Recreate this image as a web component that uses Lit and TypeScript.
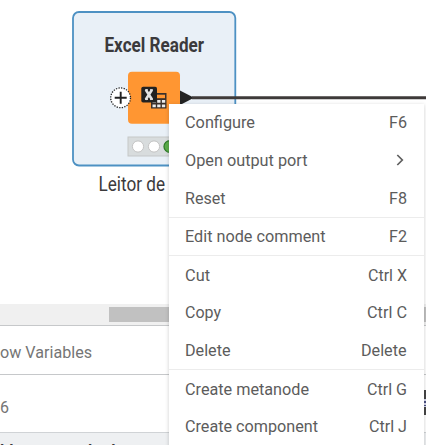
import { LitElement, html, css, svg } from "lit";
import { customElement } from "lit/decorators.js";

type Item = { label: string; key: string; width: number; keyWidth: number };

const groups: Item[][] = [
  [
    { label: "Configure", key: "F6", width: 70, keyWidth: 18 },
    { label: "Open output port", key: "", width: 122.5, keyWidth: 0 },
    { label: "Reset", key: "F8", width: 40.5, keyWidth: 18 },
  ],
  [{ label: "Edit node comment", key: "F2", width: 140.5, keyWidth: 18 }],
  [
    { label: "Cut", key: "Ctrl X", width: 25, keyWidth: 39 },
    { label: "Copy", key: "Ctrl C", width: 36, keyWidth: 40 },
    { label: "Delete", key: "Delete", width: 45.5, keyWidth: 45.5 },
  ],
  [
    { label: "Create metanode", key: "Ctrl G", width: 124, keyWidth: 40 },
    { label: "Create component", key: "Ctrl J", width: 133, keyWidth: 38 },
  ],
];

const fitted = (text: string, width: number) => html`
  <svg class="fit" width=${width} height="24">
    ${svg`<text x="0" y="18" textLength=${width} lengthAdjust="spacingAndGlyphs">${text}</text>`}
  </svg>`;

@customElement("app-root")
export class AppRoot extends LitElement {
  static styles = css`
    :host { display: block; position: relative; width: 426px; height: 445px; overflow: hidden; background: #fff; font-family: Roboto, sans-serif; }
    * { box-sizing: border-box; }
    svg { display: block; overflow: visible; flex: none; }
    .canvas { height: 304px; overflow: hidden; }
    .graph text { font-family: Roboto, sans-serif; fill: #3b3a3c; }
    .track { height: 21px; background: #f0f0f0; padding: 3px 0 3px 109px; }
    .thumb { height: 15px; background: #c1c1c1; }
    .tabs { height: 50px; border-top: 1px solid #c6c8ca; border-bottom: 1px solid #c6c8ca; display: flex; align-items: center; padding-top: 4px; }
    .count { height: 58px; border-bottom: 1px solid #d0d3d6; display: flex; align-items: center; padding-top: 7px; position: relative; }
    .panel .fit text { font-size: 16px; fill: #757575; }
    .head { height: 30px; background: #eef0f2; padding-top: 8px; display: flex; font-size: 16px; line-height: 19px; font-weight: 700; color: #3b3a3c; white-space: nowrap; }
    .col { width: 88px; letter-spacing: 5px; }
    .gap { margin-left: 19px; }
    .edge { position: absolute; left: 424px; top: 15px; width: 2px; height: 25px; background: linear-gradient(#444 9px, #d5d7ee 9px 11px, #4a5080 11px 13px, #d5d7ee 13px 15px, #4a5080 15px 16px, #d5d7ee 16px 17px, #444 17px); }
    .menu { position: absolute; left: 169px; top: 104px; width: 255px; height: 350px; background: #fff; box-shadow: 0 1px 4px rgba(50, 50, 50, 0.23); }
    .group + .group { border-top: 1px solid #ececec; }
    .item { height: 37.6px; display: flex; align-items: center; justify-content: space-between; padding: 0 17.5px 0.8px 16.3px; }
    .item .fit text { font-size: 16px; fill: #5c5c5c; }
    .arrow { margin-right: 3px; margin-top: 1px; }
  `;

  render() {
    return html`
      <div class="canvas">
        <svg class="graph" width="426" height="304">
          <rect x="73" y="12" width="162.3" height="153.5" rx="6" fill="#e9f0f7" stroke="#4d91c3" stroke-width="1.8" />
          <text x="104.5" y="52.3" font-size="19.5" font-weight="700" textLength="99.5" lengthAdjust="spacingAndGlyphs">Excel Reader</text>
          <rect x="128" y="71.7" width="52" height="52" rx="4" fill="#ff9632" />
          <circle cx="120.6" cy="97.8" r="9.9" fill="#fff" stroke="#222" stroke-width="1.3" stroke-dasharray="1.3 1.3" />
          <path d="M114.7 97.8h12M120.7 91.8v12" stroke="#222" stroke-width="1.9" />
          <path d="M151 93h15.5v15.5H151z" fill="#3a302b" />
          <path d="M153 94.7h12v3.5h-12z" fill="#ff9632" />
          <path d="M152.5 100h3.3v2.8h-3.3zM157.2 100h3.3v2.8h-3.3zM161.9 100h3.3v2.8h-3.3zM152.5 104.4h3.3v2.8h-3.3zM157.2 104.4h3.3v2.8h-3.3zM161.9 104.4h3.3v2.8h-3.3z" fill="#ececec" />
          <rect x="141.3" y="86.8" width="15.7" height="15.7" rx="1.8" fill="#222" />
          <path d="M145.8 89.8l6.2 9.7M152 89.8l-6.2 9.7" stroke="#e3e3e3" stroke-width="2.6" />
          <path d="M145 89.8h3M150 89.8h3M145 99.4h3M150 99.4h3" stroke="#e3e3e3" stroke-width="1" />
          <path d="M180 90.5l14 7.2-14 7.2z" fill="#222" />
          <path d="M192 97.8h234" stroke="#3e3a39" stroke-width="3" />
          <rect x="128" y="137" width="52" height="19" fill="#d8dcdd" stroke="#c5c7c8" />
          <circle cx="138" cy="146.5" r="5.6" fill="#fff" stroke="#c4c4c4" />
          <circle cx="154" cy="146.5" r="5.6" fill="#fff" stroke="#c4c4c4" />
          <circle cx="169.8" cy="146.5" r="5.8" fill="#5aad48" stroke="#2f7c28" stroke-width="1.3" />
          <text x="98.5" y="191.3" font-size="19.5" textLength="66.5" lengthAdjust="spacingAndGlyphs">Leitor de</text>
        </svg>
      </div>
      <div class="panel">
        <div class="track"><div class="thumb"></div></div>
        <div class="tabs">${fitted("ow Variables", 92)}</div>
        <div class="count">${fitted("6", 9)}<div class="edge"></div></div>
        <div class="head"><span class="col">ll</span><span>l</span><span class="gap">l</span></div>
      </div>
      <div class="menu">
        ${groups.map((g) => html`<div class="group">${g.map((i) => html`
          <div class="item">
            ${fitted(i.label, i.width)}
            ${i.key ? fitted(i.key, i.keyWidth) : html`
              <svg class="arrow" width="8" height="12"><path d="M1.3 1l5 5-5 5" fill="none" stroke="#5f5f5f" stroke-width="1.7" /></svg>`}
          </div>`)}</div>`)}
      </div>`;
  }
}
